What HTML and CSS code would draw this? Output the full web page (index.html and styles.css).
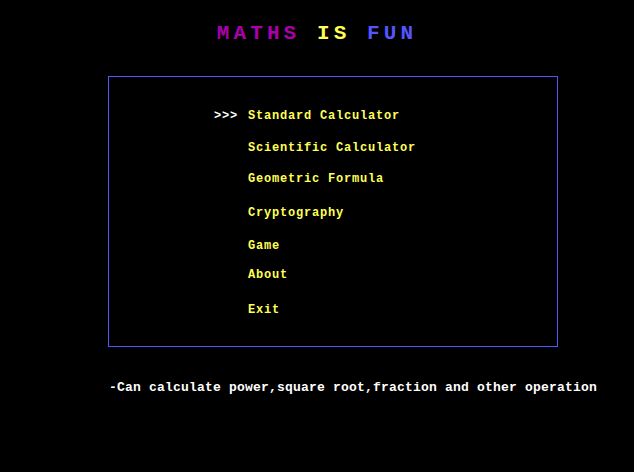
FILE: index.html
```html
<!DOCTYPE html>
<html>
<head>
<meta charset="utf-8">
<link rel="stylesheet" href="styles.css">
</head>
<body>
<h1 class="title"><span class="t-maths">MATHS</span> <span class="t-is">IS</span> <span class="t-fun">FUN</span></h1>
<div class="menu-box">
  <ul class="menu">
    <li class="item item-1"><span class="cursor">&gt;&gt;&gt;</span><span class="label">Standard Calculator</span></li>
    <li class="item item-2"><span class="cursor"></span><span class="label">Scientific Calculator</span></li>
    <li class="item item-3"><span class="cursor"></span><span class="label">Geometric Formula</span></li>
    <li class="item item-4"><span class="cursor"></span><span class="label">Cryptography</span></li>
    <li class="item item-5"><span class="cursor"></span><span class="label">Game</span></li>
    <li class="item item-6"><span class="cursor"></span><span class="label">About</span></li>
    <li class="item item-7"><span class="cursor"></span><span class="label">Exit</span></li>
  </ul>
</div>
<p class="hint">-Can calculate power,square root,fraction and other operation</p>
</body>
</html>
```
FILE: styles.css
```css
html, body {
  margin: 0;
  padding: 0;
  background: #000;
}
body {
  width: 634px;
  height: 472px;
  overflow: hidden;
  font-family: "Liberation Mono", "DejaVu Sans Mono", monospace;
  font-weight: bold;
}
.title {
  margin: 0;
  padding-top: 23px;
  height: 76px;
  box-sizing: border-box;
  text-align: center;
  font-size: 21px;
  line-height: 21px;
  letter-spacing: 4.1px;
  font-weight: bold;
  white-space: pre;
}
.t-maths { color: #aa00aa; }
.t-is { color: #ffff55; }
.t-fun { color: #5555ff; }

.menu-box {
  margin-left: 108px;
  width: 450px;
  height: 271px;
  box-sizing: border-box;
  border: 1px solid #5555ff;
  padding-top: 33px;
  padding-left: 105px;
}
.menu {
  list-style: none;
  margin: 0;
  padding: 0;
}
.item {
  display: grid;
  grid-template-columns: 34px auto;
  font-size: 12px;
  line-height: 12px;
  letter-spacing: 0.8px;
  height: 12px;
}
.cursor { color: #ffffff; }
.label { color: #ffff55; }
.item-2 { margin-top: 20px; }
.item-3 { margin-top: 19px; }
.item-4 { margin-top: 22px; }
.item-5 { margin-top: 21px; }
.item-6 { margin-top: 17px; }
.item-7 { margin-top: 23px; }

.hint {
  margin: 34px 0 0 109px;
  color: #ffffff;
  font-size: 13px;
  line-height: 14px;
  letter-spacing: 0.2px;
  white-space: pre;
}
```
